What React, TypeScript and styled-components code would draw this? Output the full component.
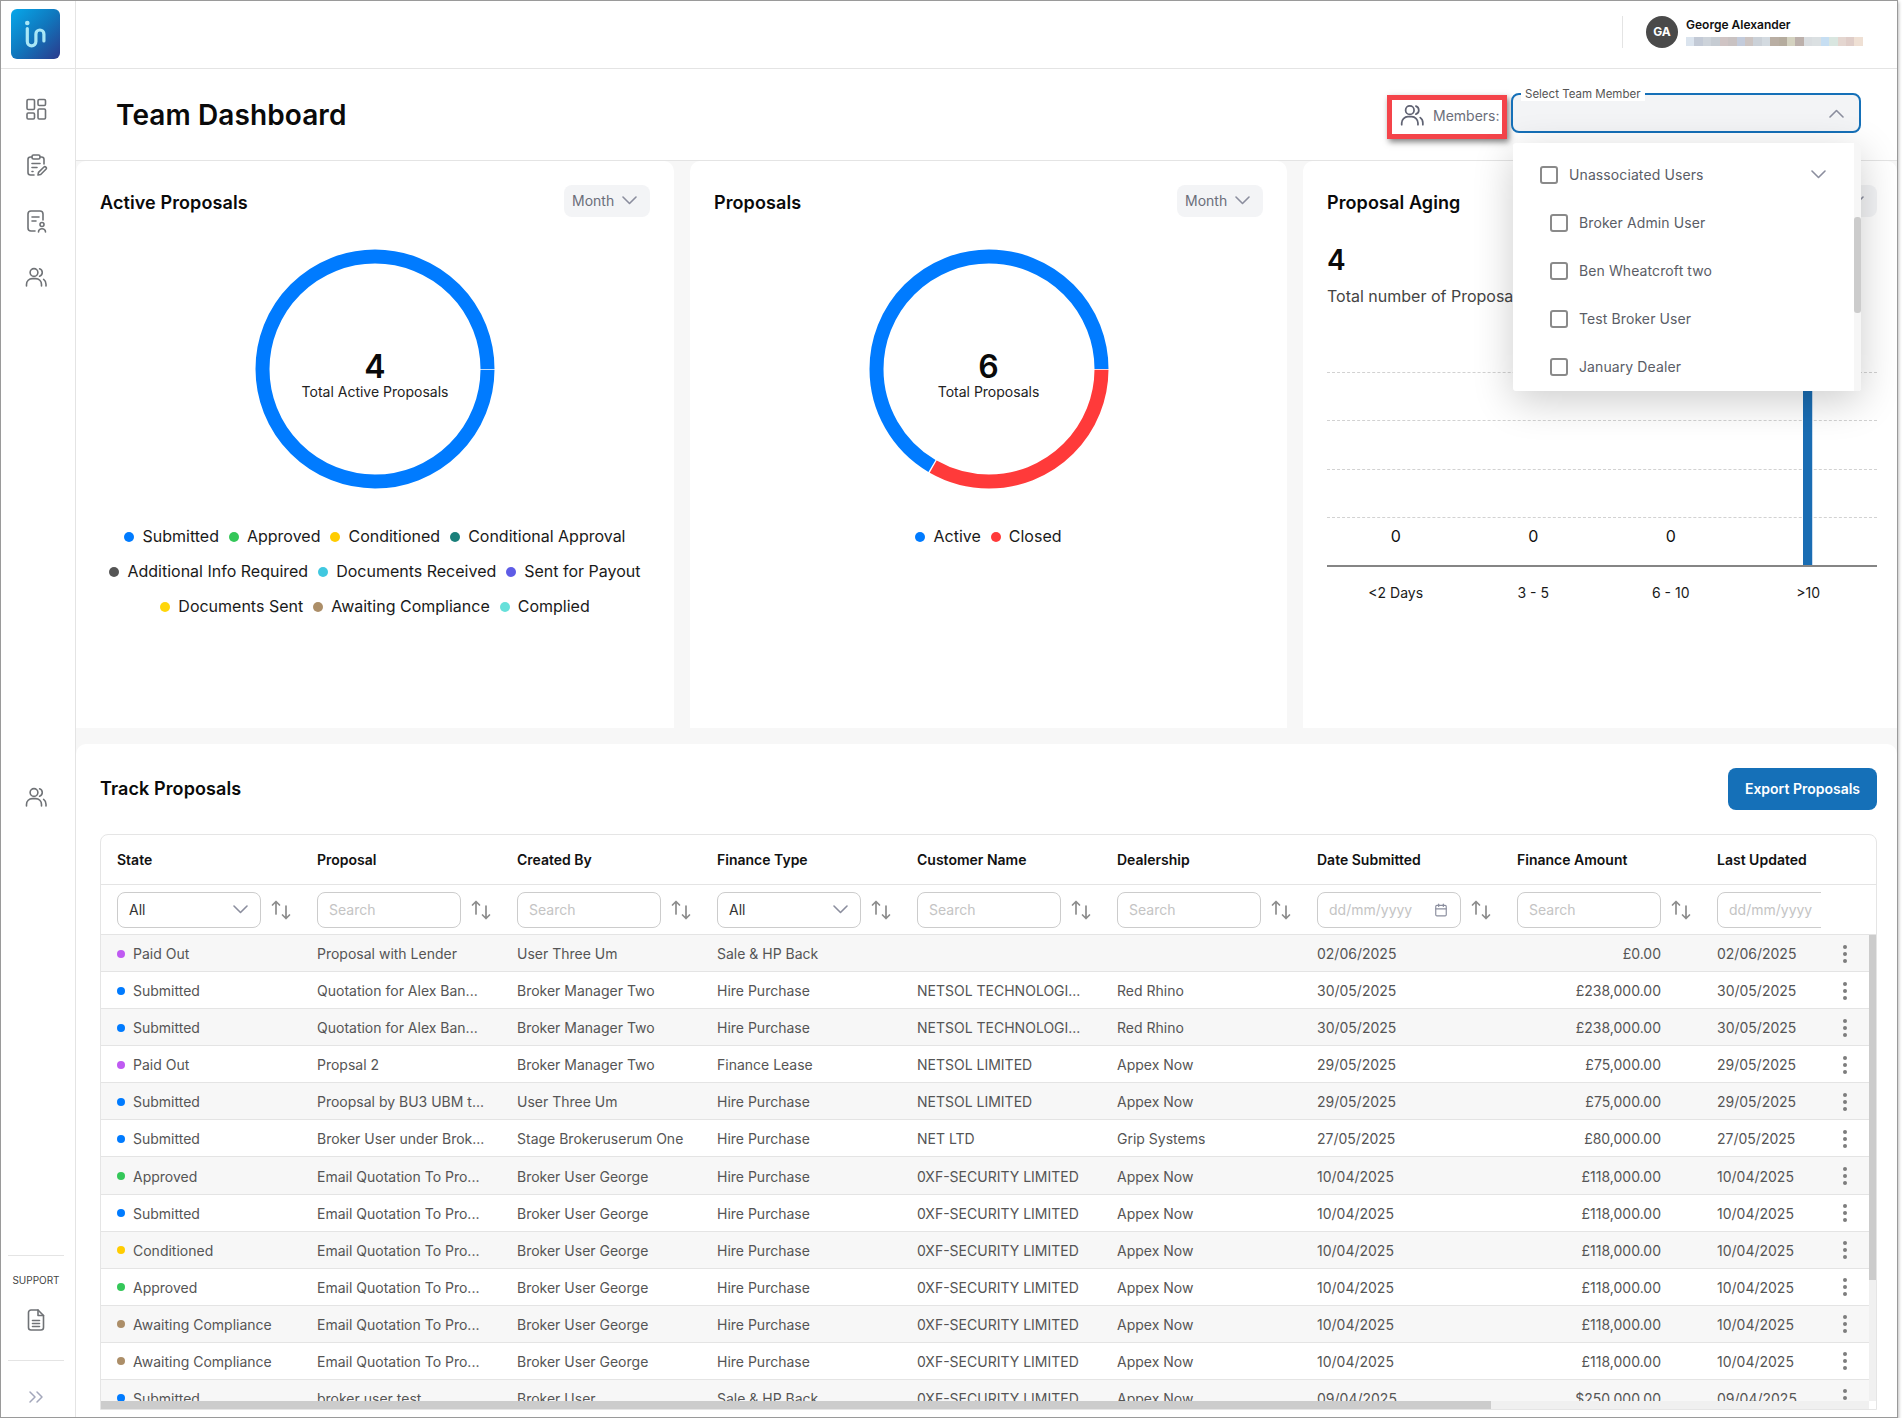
import { FunctionComponent } from 'react';
import styled, { createGlobalStyle } from 'styled-components';
import { Calendar, ChevronsRight } from 'lucide-react';

const GlobalStyle = createGlobalStyle`
	html, body {
		margin: 0;
		padding: 0;
		background: #ffffff;
		overflow: hidden;
	}
	* {
		box-sizing: border-box;
	}
	body {
		font-family: 'Inter', 'Liberation Sans', sans-serif;
		color: #111111;
	}
`;

const Frame = styled.div`
	display: grid;
	grid-template-columns: 75px 1fr;
	width: 1898px;
	height: 1418px;
	border: 1px solid #9a9a9a;
	box-shadow: 1px 2px 3px rgba(0, 0, 0, 0.25);
	background: #f7f7f7;
	overflow: hidden;
`;

const Sidebar = styled.aside`
	display: flex;
	flex-direction: column;
	background: #ffffff;
	border-right: 1px solid #e4e4e4;
`;

const LogoCell = styled.div`
	display: flex;
	align-items: center;
	height: 68px;
	padding: 0 0 2px 10px;
	border-bottom: 1px solid #e4e4e4;
	margin-right: -1px;
`;

const LogoBox = styled.div`
	display: flex;
	width: 49px;
	height: 50px;
	border-radius: 6px;
	background: linear-gradient(135deg, #07a8ea 0%, #1077bd 50%, #2b3a8c 100%);
`;

const SideNav = styled.nav`
	display: flex;
	flex-direction: column;
	align-items: center;
	gap: 32px;
	padding: 28px 4px 0 0;
`;

const SideLower = styled(SideNav)`
	padding-top: 496px;
`;

const SideIcon = styled.svg`
	width: 24px;
	height: 24px;
	fill: none;
	stroke: #6f7276;
	stroke-width: 1.6;
	stroke-linecap: round;
	stroke-linejoin: round;
`;

const SupportBlock = styled.div`
	display: flex;
	flex-direction: column;
	align-items: center;
	height: 105px;
	margin: auto 11px 0 7px;
	padding-top: 18px;
	border-top: 1px solid #e4e4e4;
`;

const SupportLabel = styled.div`
	font-size: 10px;
	line-height: 12px;
	color: #444444;
	margin-bottom: 22px;
`;

const CollapseBlock = styled.div`
	display: flex;
	justify-content: center;
	height: 57px;
	margin: 0 11px 0 7px;
	padding-top: 24px;
	border-top: 1px solid #e4e4e4;
	color: #a3a7bb;
`;

const Main = styled.main`
	display: flex;
	flex-direction: column;
	min-width: 0;
`;

const TopBar = styled.header`
	display: flex;
	justify-content: flex-end;
	align-items: center;
	height: 68px;
	padding: 0 34px 6px 0;
	background: #ffffff;
	border-bottom: 1px solid #e4e4e4;
`;

const UserBox = styled.div`
	display: flex;
	align-items: center;
	gap: 8px;
	height: 32px;
	padding-left: 23px;
	border-left: 1px solid #e4e4e4;
`;

const Avatar = styled.div`
	display: flex;
	align-items: center;
	justify-content: center;
	width: 32px;
	height: 32px;
	border-radius: 50%;
	background: #4a4a4a;
	color: #ffffff;
	font-size: 12px;
	font-weight: 700;
`;

const UserText = styled.div`
	display: flex;
	flex-direction: column;
	gap: 5px;
	width: 177px;
`;

const UserName = styled.div`
	font-size: 12px;
	line-height: 15px;
	font-weight: 600;
	color: #111111;
`;

const BlurredMail = styled.div`
	display: flex;
	height: 9px;
`;

const BlurCell = styled.span<{ $color: string }>`
	flex: 1;
	background: ${(p) => p.$color};
`;

const PageHeader = styled.section`
	position: relative;
	z-index: 5;
	display: flex;
	justify-content: space-between;
	align-items: center;
	height: 92px;
	padding: 0 36px 0 40px;
	background: #ffffff;
	border-bottom: 1px solid #e4e4e4;
`;

const PageTitle = styled.h1`
	margin: 0;
	font-size: 28px;
	font-weight: 600;
	line-height: 36px;
	letter-spacing: 0.1px;
	color: #0a0a0a;
`;

const HeaderRight = styled.div`
	display: flex;
	align-items: flex-start;
	gap: 4px;
	height: 44px;
`;

const MembersTag = styled.div`
	display: flex;
	align-items: center;
	gap: 8px;
	width: 120px;
	height: 44px;
	margin-top: 2px;
	padding: 0 0 3px 7px;
	border: 5px solid #f4444a;
	box-shadow: 2px 3px 6px rgba(0, 0, 0, 0.5);
	font-size: 14px;
	color: #6b6e7a;
	white-space: nowrap;

	svg {
		width: 26px;
		height: 26px;
		stroke: #5f6272;
	}
`;

const TeamSelect = styled.div`
	position: relative;
	display: flex;
	justify-content: flex-end;
	align-items: center;
	width: 350px;
	height: 40px;
	padding: 1px 15px 0 0;
	border: 2px solid #1570b8;
	border-radius: 8px;
	background: #f3f4f6;
`;

const FloatingLabel = styled.span`
	position: absolute;
	left: 8px;
	top: -8px;
	padding: 0 4px;
	background: #ffffff;
	font-size: 11.5px;
	line-height: 14px;
	color: #555555;
`;

const Dropdown = styled.div`
	position: absolute;
	left: 0;
	top: 48px;
	display: flex;
	width: 348px;
	height: 248px;
	border-radius: 3px;
	background: #ffffff;
	box-shadow: 0 10px 40px rgba(0, 0, 0, 0.2);
	overflow: hidden;
`;

const DropList = styled.div`
	flex: 1;
	padding-top: 8px;
`;

const DropItem = styled.div<{ $child?: boolean }>`
	display: flex;
	align-items: center;
	gap: 11px;
	height: 48px;
	padding: 0 28px 0 ${(p) => (p.$child ? 37 : 27)}px;
	font-size: 14px;
	letter-spacing: 0.1px;
	color: #5a5d66;
`;

const CheckBox = styled.span`
	flex: none;
	width: 18px;
	height: 18px;
	border: 2px solid #8a8a8a;
	border-radius: 3px;
	background: #ffffff;
`;

const DropItemLabel = styled.span`
	flex: 1;
`;

const DropScroll = styled.div`
	width: 7px;
	padding-top: 74px;
	background: #f6f6f6;
`;

const DropThumb = styled.div`
	height: 96px;
	border-radius: 3px;
	background: #cccccc;
`;

const ChevronSvg = styled.svg<{ $up?: boolean }>`
	flex: none;
	width: 15px;
	height: 9px;
	fill: none;
	stroke: #8b8e9e;
	stroke-width: 1.6;
	stroke-linecap: round;
	stroke-linejoin: round;
	transform: ${(p) => (p.$up ? 'rotate(180deg)' : 'none')};
`;

const CardRow = styled.div`
	display: grid;
	grid-template-columns: 598px 597px 594px;
	gap: 16px;
	height: 567px;
`;

const Card = styled.div<{ $padRight?: number }>`
	padding: 24px ${(p) => p.$padRight ?? 24}px 0 24px;
	border-radius: 10px 10px 0 0;
	background: #ffffff;
`;

const CardHeader = styled.div`
	display: flex;
	justify-content: space-between;
	align-items: flex-end;
`;

const CardTitle = styled.h2`
	margin: 0;
	font-size: 18px;
	font-weight: 600;
	line-height: 28px;
	letter-spacing: 0.1px;
	color: #0a0a0a;
`;

const PeriodButton = styled.div`
	display: flex;
	align-items: center;
	gap: 8px;
	width: 86px;
	height: 32px;
	padding: 0 0 1px 8px;
	border-radius: 8px;
	background: #f3f4f6;
	font-size: 14px;
	color: #6b6e7a;
`;

const DonutWrap = styled.div`
	position: relative;
	width: 240px;
	height: 240px;
	margin: 32px auto 0;
`;

const DonutSvg = styled.svg`
	display: block;
	fill: none;
`;

const DonutCenter = styled.div`
	position: absolute;
	inset: 0;
	display: flex;
	flex-direction: column;
	align-items: center;
	padding-top: 98px;
`;

const DonutValue = styled.div`
	font-size: 32px;
	font-weight: 600;
	line-height: 40px;
	color: #0a0a0a;
`;

const DonutLabel = styled.div`
	margin-top: -4px;
	font-size: 14px;
	line-height: 18px;
	color: #222222;
`;

const Legend = styled.div`
	display: flex;
	flex-wrap: wrap;
	justify-content: center;
	column-gap: 10px;
	margin-top: 30px;
`;

const LegendItem = styled.div`
	display: flex;
	align-items: center;
	gap: 8px;
	font-size: 16px;
	line-height: 35px;
	color: #1a1a1a;
	white-space: nowrap;
`;

const Dot = styled.span<{ $color: string; $size: number }>`
	flex: none;
	width: ${(p) => p.$size}px;
	height: ${(p) => p.$size}px;
	border-radius: 50%;
	background: ${(p) => p.$color};
`;

const AgingValue = styled.div`
	margin-top: 25px;
	font-size: 28px;
	font-weight: 600;
	line-height: 36px;
	color: #0a0a0a;
`;

const AgingText = styled.div`
	margin-top: 6px;
	font-size: 16px;
	line-height: 24px;
	color: #444444;
	white-space: nowrap;
`;

const Plot = styled.div`
	position: relative;
	display: grid;
	grid-template-columns: repeat(4, 1fr);
	height: 243px;
	margin: 16px 0 0 0;
	border-bottom: 2px solid #858585;
`;

const GridLayer = styled.div`
	position: absolute;
	inset: 48px 0 0 0;
`;

const GridLine = styled.div`
	height: 48.4px;
	border-top: 1px dashed #d2d2d2;
`;

const PlotColumn = styled.div`
	position: relative;
	display: flex;
	justify-content: center;
	align-items: flex-end;
	padding-bottom: 19px;
	font-size: 16px;
	line-height: 20px;
`;

const Bar = styled.div`
	width: 10px;
	height: 100%;
	margin-bottom: -19px;
	background: #1a6db3;
	border-right: 1px solid #c9dcef;
`;

const AxisLabels = styled.div`
	display: grid;
	grid-template-columns: repeat(4, 1fr);
	margin: 16px 0 0 0;
	font-size: 14px;
	line-height: 20px;
	text-align: center;
	color: #1a1a1a;
`;

const TrackSection = styled.section`
	flex: 1;
	margin-top: 16px;
	padding: 24px 20px 0 24px;
	border-radius: 10px 10px 0 0;
	background: #ffffff;
`;

const TrackHeader = styled.div`
	display: flex;
	justify-content: space-between;
	align-items: center;
`;

const ExportButton = styled.button`
	width: 149px;
	height: 42px;
	padding: 0 0 1px;
	border: none;
	border-radius: 8px;
	background: #1570b8;
	color: #ffffff;
	font-family: inherit;
	font-size: 14px;
	font-weight: 600;
`;

const TableFrame = styled.div`
	display: flex;
	flex-direction: column;
	height: 576px;
	margin-top: 24px;
	border: 1px solid #e5e5e5;
	border-radius: 8px 8px 0 0;
	overflow: hidden;
`;

const ColumnRow = styled.div`
	display: grid;
	grid-template-columns: repeat(8, 200px) 104px;
	flex: none;
	height: 50px;
	padding-left: 16px;
	border-bottom: 1px solid #e4e4e4;
`;

const HeadCell = styled.div`
	display: flex;
	align-items: center;
	font-size: 14px;
	font-weight: 600;
	color: #111111;
`;

const FilterCell = styled.div`
	display: flex;
	align-items: center;
	gap: 9px;
	min-width: 0;
	overflow: hidden;
`;

const FilterBox = styled.div<{ $muted?: boolean }>`
	display: flex;
	flex: none;
	justify-content: space-between;
	align-items: center;
	width: 144px;
	height: 36px;
	padding: 0 12px 0 11px;
	border: 1px solid #cccccc;
	border-radius: 8px;
	font-size: 14px;
	color: ${(p) => (p.$muted ? '#c4c4c4' : '#333333')};
`;

const SortIcon = styled.svg`
	flex: none;
	width: 22px;
	height: 22px;
	fill: none;
	stroke: #8c8c8c;
	stroke-width: 1.7;
	stroke-linecap: round;
	stroke-linejoin: round;
`;

const TableBody = styled.div`
	display: flex;
	flex: 1;
	min-height: 0;
`;

const BodyLeft = styled.div`
	display: flex;
	flex: 1;
	flex-direction: column;
	min-width: 0;
`;

const RowList = styled.div`
	flex: 1;
	min-height: 0;
	overflow: hidden;
`;

const DataRow = styled.div`
	display: grid;
	grid-template-columns: repeat(7, 200px) 144px 56px 104px 48px;
	align-items: center;
	height: 37.08px;
	padding: 1px 0 0 16px;
	border-bottom: 1px solid #e4e4e4;
	font-size: 14px;
	color: #555555;
	white-space: nowrap;

	&:nth-child(odd) {
		background: #f7f7f7;
	}
`;

const StateCell = styled.div`
	display: flex;
	align-items: center;
	gap: 8px;
`;

const AmountCell = styled.div`
	text-align: right;
`;

const Kebab = styled.svg`
	justify-self: center;
	width: 6px;
	height: 20px;
	fill: #7d7d7d;
`;

const HScroll = styled.div`
	flex: none;
	height: 8px;
	background: #f0f0f0;
`;

const HThumb = styled.div`
	width: 1390px;
	height: 100%;
	background: #cccccc;
`;

const VColumn = styled.div`
	display: flex;
	flex: none;
	flex-direction: column;
	width: 7px;
	padding-bottom: 8px;
`;

const VTrack = styled.div`
	flex: 1;
	background: #f0f0f0;
`;

const VThumb = styled.div`
	height: 345px;
	background: #cccccc;
`;

const Chevron: FunctionComponent<{ up?: boolean }> = ({ up }) => (
	<ChevronSvg $up={up} viewBox="0 0 15 9">
		<path d="M1 1l6.5 6.5L14 1" />
	</ChevronSvg>
);

const UsersGlyph: FunctionComponent = () => (
	<SideIcon viewBox="0 0 24 24">
		<circle cx="10" cy="7.5" r="3.9" />
		<path d="M2.5 21v-1.6a5.8 5.8 0 0 1 5.8-5.8h3.4a5.8 5.8 0 0 1 5.8 5.8V21" />
		<path d="M15.6 3.8a3.9 3.9 0 0 1 0 7.4" />
		<path d="M19.6 14.4a5.8 5.8 0 0 1 2.4 4.8V21" />
	</SideIcon>
);

const SortGlyph: FunctionComponent = () => (
	<SortIcon viewBox="0 0 22 22">
		<path d="M6 15V2.5M2.5 6 6 2.5 9.5 6" />
		<path d="M16 7v12.5M12.5 16l3.5 3.5 3.5-3.5" />
	</SortIcon>
);

const legendColors: Record<string, string> = {
	Submitted: '#007bff',
	Approved: '#34c759',
	Conditioned: '#ffcc00',
	'Conditional Approval': '#1a7f7a',
	'Additional Info Required': '#555555',
	'Documents Received': '#40c8e0',
	'Sent for Payout': '#5e5ce6',
	'Documents Sent': '#ffd60a',
	'Awaiting Compliance': '#ac8e68',
	Complied: '#66e0da',
};

const stateColors: Record<string, string> = {
	...legendColors,
	'Paid Out': '#bf5af2',
};

const Donut: FunctionComponent<{
	value: number;
	label: string;
	segments: { share: number; color: string }[];
}> = ({ value, label, segments }) => {
	const radius = 112.5;
	const length = 2 * Math.PI * radius;
	let used = 0;
	return (
		<DonutWrap>
			<DonutSvg width="240" height="240" viewBox="0 0 240 240">
				{segments.map((s) => {
					const dash = s.share * length - 1.4;
					const offset = -used * length - 0.7;
					used += s.share;
					return (
						<circle
							key={s.color}
							cx="120"
							cy="120"
							r={radius}
							stroke={s.color}
							strokeWidth="14"
							strokeDasharray={`${dash} ${length - dash}`}
							strokeDashoffset={offset}
						/>
					);
				})}
			</DonutSvg>
			<DonutCenter>
				<DonutValue>{value}</DonutValue>
				<DonutLabel>{label}</DonutLabel>
			</DonutCenter>
		</DonutWrap>
	);
};

const blurColors = [
	'#dbe4ee', '#c3cad6', '#cdd3da', '#c6ccd3', '#cfc4c4', '#c9c2c2', '#c3cbdb',
	'#ccc4c2', '#cbd1d8', '#d3dae0', '#b9aea3', '#b5ac9e', '#d4d2c0', '#bcb0ab',
	'#d9dde0', '#dbe0e2', '#c6def2', '#d9e6e0', '#e4d6d0', '#dfcdc8', '#efe0d4',
];

const columns = [
	'State', 'Proposal', 'Created By', 'Finance Type', 'Customer Name',
	'Dealership', 'Date Submitted', 'Finance Amount', 'Last Updated',
];

const filters: { text: string; kind: 'select' | 'search' | 'date' }[] = [
	{ text: 'All', kind: 'select' },
	{ text: 'Search', kind: 'search' },
	{ text: 'Search', kind: 'search' },
	{ text: 'All', kind: 'select' },
	{ text: 'Search', kind: 'search' },
	{ text: 'Search', kind: 'search' },
	{ text: 'dd/mm/yyyy', kind: 'date' },
	{ text: 'Search', kind: 'search' },
	{ text: 'dd/mm/yyyy', kind: 'date' },
];

const emailQuote = (state: string) => [
	state, 'Email Quotation To Pro...', 'Broker User George', 'Hire Purchase',
	'0XF-SECURITY LIMITED', 'Appex Now', '10/04/2025', '£118,000.00', '10/04/2025',
];

const rows: string[][] = [
	['Paid Out', 'Proposal with Lender', 'User Three Um', 'Sale & HP Back', '', '', '02/06/2025', '£0.00', '02/06/2025'],
	['Submitted', 'Quotation for Alex Ban...', 'Broker Manager Two', 'Hire Purchase', 'NETSOL TECHNOLOGI...', 'Red Rhino', '30/05/2025', '£238,000.00', '30/05/2025'],
	['Submitted', 'Quotation for Alex Ban...', 'Broker Manager Two', 'Hire Purchase', 'NETSOL TECHNOLOGI...', 'Red Rhino', '30/05/2025', '£238,000.00', '30/05/2025'],
	['Paid Out', 'Propsal 2', 'Broker Manager Two', 'Finance Lease', 'NETSOL LIMITED', 'Appex Now', '29/05/2025', '£75,000.00', '29/05/2025'],
	['Submitted', 'Proopsal by BU3 UBM t...', 'User Three Um', 'Hire Purchase', 'NETSOL LIMITED', 'Appex Now', '29/05/2025', '£75,000.00', '29/05/2025'],
	['Submitted', 'Broker User under Brok...', 'Stage Brokeruserum One', 'Hire Purchase', 'NET LTD', 'Grip Systems', '27/05/2025', '£80,000.00', '27/05/2025'],
	emailQuote('Approved'),
	emailQuote('Submitted'),
	emailQuote('Conditioned'),
	emailQuote('Approved'),
	emailQuote('Awaiting Compliance'),
	emailQuote('Awaiting Compliance'),
	['Submitted', 'broker user test', 'Broker User', 'Sale & HP Back', '0XF-SECURITY LIMITED', 'Appex Now', '09/04/2025', '$250,000.00', '09/04/2025'],
];

const teamMembers = ['Broker Admin User', 'Ben Wheatcroft two', 'Test Broker User', 'January Dealer'];

const agingBuckets = [
	{ label: '<2 Days', value: '0' },
	{ label: '3 - 5', value: '0' },
	{ label: '6 - 10', value: '0' },
	{ label: '>10', value: '' },
];

const App: FunctionComponent = () => {
	return (
		<Frame>
			<GlobalStyle />
			<Sidebar>
				<LogoCell>
					<LogoBox>
						<svg width="49" height="50" viewBox="0 0 49 50" fill="none" stroke="#a9e7f6" strokeWidth="3.2" strokeLinecap="round">
							<circle cx="16.3" cy="14" r="2.3" fill="#a9e7f6" stroke="none" />
							<path d="M16.3 19.5v13a4.3 4.3 0 0 0 8.6 0V25a4 4 0 0 1 8 0v7" />
						</svg>
					</LogoBox>
				</LogoCell>
				<SideNav>
					<SideIcon viewBox="0 0 24 24">
						<rect x="3" y="2.5" width="7.5" height="10" rx="1.2" />
						<rect x="14" y="2.5" width="7.5" height="6" rx="1.2" />
						<rect x="14" y="12" width="7.5" height="10" rx="1.2" />
						<rect x="3" y="16" width="7.5" height="6" rx="1.2" />
					</SideIcon>
					<SideIcon viewBox="0 0 24 24">
						<path d="M8 4H6.5A2.5 2.5 0 0 0 4 6.5v13A2.5 2.5 0 0 0 6.5 22H10" />
						<path d="M16 4h1.5A2.5 2.5 0 0 1 20 6.5V11" />
						<rect x="8" y="2" width="8" height="4" rx="1.5" />
						<path d="M8 10.5h8M8 14.5h5M8 18.5h1" />
						<path d="M14 22l.5-2.6 5.2-5.2a1.5 1.5 0 0 1 2.2 2.1L16.7 21.5z" />
					</SideIcon>
					<SideIcon viewBox="0 0 24 24">
						<path d="M11 22H7a3 3 0 0 1-3-3V5a3 3 0 0 1 3-3h9a3 3 0 0 1 3 3v6" />
						<path d="M8 8h7M8 12h4" />
						<circle cx="18" cy="15.5" r="2" />
						<path d="M14.5 23c0-1.8 1.6-3.3 3.5-3.3s3.5 1.5 3.5 3.3" />
					</SideIcon>
					<UsersGlyph />
				</SideNav>
				<SideLower>
					<UsersGlyph />
				</SideLower>
				<SupportBlock>
					<SupportLabel>SUPPORT</SupportLabel>
					<SideIcon viewBox="0 0 24 24">
						<path d="M14 2H7a2.5 2.5 0 0 0-2.5 2.5v15A2.5 2.5 0 0 0 7 22h10a2.5 2.5 0 0 0 2.5-2.5V7.5z" />
						<path d="M14 2v5.5h5.5" />
						<path d="M8.5 12.5h7M8.5 15.5h7M8.5 18.5h7" />
					</SideIcon>
				</SupportBlock>
				<CollapseBlock>
					<ChevronsRight size={24} strokeWidth={1.5} />
				</CollapseBlock>
			</Sidebar>
			<Main>
				<TopBar>
					<UserBox>
						<Avatar>GA</Avatar>
						<UserText>
							<UserName>George Alexander</UserName>
							<BlurredMail>
								{blurColors.map((c, i) => (
									<BlurCell key={i} $color={c} />
								))}
							</BlurredMail>
						</UserText>
					</UserBox>
				</TopBar>
				<PageHeader>
					<PageTitle>Team Dashboard</PageTitle>
					<HeaderRight>
						<MembersTag>
							<UsersGlyph />
							Members:
						</MembersTag>
						<TeamSelect>
							<FloatingLabel>Select Team Member</FloatingLabel>
							<Chevron up />
							<Dropdown>
								<DropList>
									<DropItem>
										<CheckBox />
										<DropItemLabel>Unassociated Users</DropItemLabel>
										<Chevron />
									</DropItem>
									{teamMembers.map((name) => (
										<DropItem $child key={name}>
											<CheckBox />
											<DropItemLabel>{name}</DropItemLabel>
										</DropItem>
									))}
								</DropList>
								<DropScroll>
									<DropThumb />
								</DropScroll>
							</Dropdown>
						</TeamSelect>
					</HeaderRight>
				</PageHeader>
				<CardRow>
					<Card>
						<CardHeader>
							<CardTitle>Active Proposals</CardTitle>
							<PeriodButton>
								Month
								<Chevron />
							</PeriodButton>
						</CardHeader>
						<Donut value={4} label="Total Active Proposals" segments={[{ share: 1, color: '#007bff' }]} />
						<Legend>
							{Object.keys(legendColors).map((name) => (
								<LegendItem key={name}>
									<Dot $color={legendColors[name]} $size={10} />
									{name}
								</LegendItem>
							))}
						</Legend>
					</Card>
					<Card>
						<CardHeader>
							<CardTitle>Proposals</CardTitle>
							<PeriodButton>
								Month
								<Chevron />
							</PeriodButton>
						</CardHeader>
						<Donut
							value={6}
							label="Total Proposals"
							segments={[
								{ share: 1 / 3, color: '#ff3a3a' },
								{ share: 2 / 3, color: '#007bff' },
							]}
						/>
						<Legend>
							<LegendItem>
								<Dot $color="#007bff" $size={10} />
								Active
							</LegendItem>
							<LegendItem>
								<Dot $color="#ff3a3a" $size={10} />
								Closed
							</LegendItem>
						</Legend>
					</Card>
					<Card $padRight={20}>
						<CardHeader>
							<CardTitle>Proposal Aging</CardTitle>
							<PeriodButton>
								Month
								<Chevron />
							</PeriodButton>
						</CardHeader>
						<AgingValue>4</AgingValue>
						<AgingText>Total number of Proposals</AgingText>
						<Plot>
							<GridLayer>
								<GridLine />
								<GridLine />
								<GridLine />
								<GridLine />
							</GridLayer>
							{agingBuckets.map((b) => (
								<PlotColumn key={b.label}>{b.value || <Bar />}</PlotColumn>
							))}
						</Plot>
						<AxisLabels>
							{agingBuckets.map((b) => (
								<div key={b.label}>{b.label}</div>
							))}
						</AxisLabels>
					</Card>
				</CardRow>
				<TrackSection>
					<TrackHeader>
						<CardTitle>Track Proposals</CardTitle>
						<ExportButton>Export Proposals</ExportButton>
					</TrackHeader>
					<TableFrame>
						<ColumnRow>
							{columns.map((c) => (
								<HeadCell key={c}>{c}</HeadCell>
							))}
						</ColumnRow>
						<ColumnRow>
							{filters.map((f, i) => (
								<FilterCell key={i}>
									<FilterBox $muted={f.kind !== 'select'}>
										{f.text}
										{f.kind === 'select' && <Chevron />}
										{f.kind === 'date' && <Calendar size={14} color="#8b8e9e" />}
									</FilterBox>
									<SortGlyph />
								</FilterCell>
							))}
						</ColumnRow>
						<TableBody>
							<BodyLeft>
								<RowList>
									{rows.map((r, i) => (
										<DataRow key={i}>
											<StateCell>
												<Dot $color={stateColors[r[0]]} $size={8} />
												{r[0]}
											</StateCell>
											<div>{r[1]}</div>
											<div>{r[2]}</div>
											<div>{r[3]}</div>
											<div>{r[4]}</div>
											<div>{r[5]}</div>
											<div>{r[6]}</div>
											<AmountCell>{r[7]}</AmountCell>
											<span />
											<div>{r[8]}</div>
											<Kebab viewBox="0 0 6 20">
												<circle cx="3" cy="3" r="2" />
												<circle cx="3" cy="10" r="2" />
												<circle cx="3" cy="17" r="2" />
											</Kebab>
										</DataRow>
									))}
								</RowList>
								<HScroll>
									<HThumb />
								</HScroll>
							</BodyLeft>
							<VColumn>
								<VTrack>
									<VThumb />
								</VTrack>
							</VColumn>
						</TableBody>
					</TableFrame>
				</TrackSection>
			</Main>
		</Frame>
	);
};

export default App;
